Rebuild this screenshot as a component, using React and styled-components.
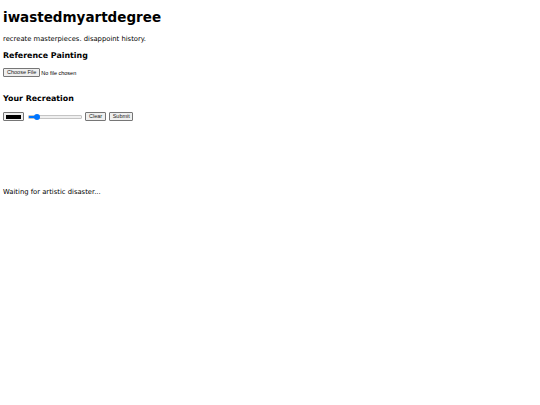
import React from 'react'
import styled, { createGlobalStyle } from 'styled-components'

const Global = createGlobalStyle`
  html, body { margin: 0; padding: 0; background: #fff; }
  body { font-family: 'DejaVu Sans', Verdana, sans-serif; color: #000; }
`

const Page = styled.main`
  padding: 0 3px;
  display: flex;
  flex-direction: column;
`

const Title = styled.h1`
  margin: 9px 0 0;
  font-size: 13.5px;
  line-height: 16px;
  font-weight: bold;
`

const Tagline = styled.p`
  margin: 10px 0 0;
  font-size: 6.8px;
  line-height: 9px;
`

const Heading = styled.h2`
  margin: ${p => p.$top}px 0 0;
  font-size: 7.9px;
  line-height: 10px;
  font-weight: bold;
`

const Row = styled.div`
  display: flex;
  align-items: center;
  gap: ${p => p.$gap || 3}px;
  margin-top: ${p => p.$top}px;
  height: ${p => p.$h}px;
`

const Button = styled.button`
  font-family: 'Liberation Sans', Arial, sans-serif;
  font-size: 5.5px;
  line-height: 7px;
  padding: 0 ${p => p.$pad || 3}px;
  height: 8.5px;
  background: #efefef;
  border: 0.5px solid #767676;
  border-radius: 1px;
  color: #222;
`

const FileNote = styled.span`
  font-family: 'Liberation Sans', Arial, sans-serif;
  font-size: 5.5px;
  margin-left: -1px;
`

const Swatch = styled.div`
  width: 21px;
  height: 9px;
  box-sizing: border-box;
  border: 0.5px solid #767676;
  border-radius: 1px;
  background: #efefef;
  padding: 1.5px 2px;
  display: flex;
  span { flex: 1; background: #000; }
`

const Slider = styled.div`
  position: relative;
  width: 54px;
  height: 8px;
  margin-left: 1px;
  display: flex;
  align-items: center;
`

const Track = styled.div`
  flex: 1;
  height: 2px;
  border-radius: 1px;
  border: 0.5px solid #c4c4c4;
  background: linear-gradient(to right, #0075ff 0 ${p => p.$pct}%, #efefef ${p => p.$pct}% 100%);
`

const Thumb = styled.div`
  position: absolute;
  top: 1px;
  width: 6px;
  height: 6px;
  border-radius: 50%;
  background: #0075ff;
`

const CanvasArea = styled.div`
  height: 65.5px;
`

const Status = styled.p`
  margin: 0;
  font-size: 6.8px;
  line-height: 9px;
`

export default function App() {
  const pct = 12
  return (
    <>
      <Global />
      <Page>
        <Title>iwastedmyartdegree</Title>
        <Tagline>recreate masterpieces. disappoint history.</Tagline>
        <Heading $top={6.5}>Reference Painting</Heading>
        <Row $top={7.5} $h={9} $gap={2}>
          <Button>Choose File</Button>
          <FileNote>No file chosen</FileNote>
        </Row>
        <Heading $top={17}>Your Recreation</Heading>
        <Row $top={7} $h={11} $gap={3}>
          <Swatch><span /></Swatch>
          <Slider>
            <Track $pct={pct} />
            <Thumb style={{ left: `${pct}%` }} />
          </Slider>
          <Button>Clear</Button>
          <Button $pad={2.5}>Submit</Button>
        </Row>
        <CanvasArea />
        <Status>Waiting for artistic disaster...</Status>
      </Page>
    </>
  )
}
